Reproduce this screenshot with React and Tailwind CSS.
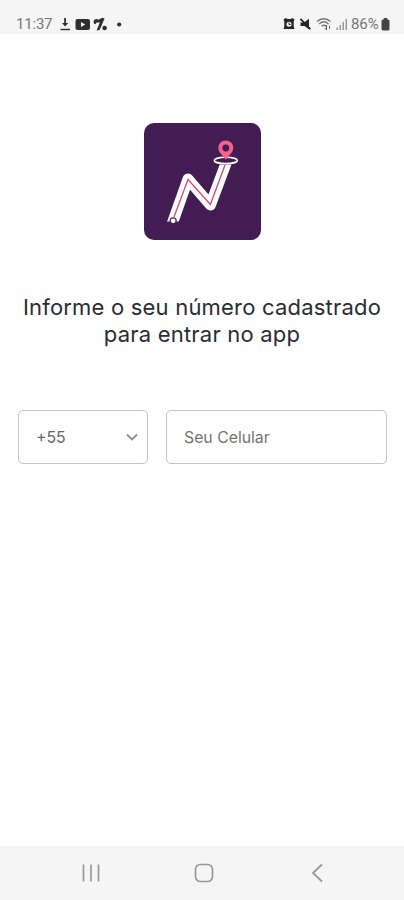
import { useState } from 'react'

function StatusIcons() {
  return (
    <svg width="64" height="16" viewBox="0 0 64 16" className="text-[#303030]" fill="currentColor">
      {/* download */}
      <path d="M4.2 2h1.8v5h2.2L5.1 10.4 2 7h2.2z" />
      <path d="M.5 12.8h9.6v1.4H.5z" />
      {/* video */}
      <rect x="15.5" y="3" width="14.5" height="11" rx="2" />
      <path d="M21 6v5l4.2-2.5z" fill="#f5f5f5" />
      {/* percent-like badge */}
      <path d="M33.6 5.8c0-2.6 3-3.6 5-2l3.4-2 2.6.8L39.6 14l-3 .4 3.2-8-3 .2-1.6 1.6c-1-.2-1.6-1-1.6-2.4z" />
      <circle cx="44.6" cy="12" r="2.3" />
      <circle cx="59.2" cy="8.5" r="2.1" />
    </svg>
  )
}

function SystemIcons() {
  return (
    <svg width="66" height="16" viewBox="0 0 66 16" className="text-[#262626]" fill="currentColor">
      {/* alarm */}
      <path d="M.5 3.5 2.5 2l2 1h3l2-1 2 1.5-.8 2v5l.8 2.5H.5l.8-2.5v-5z" />
      <circle cx="6" cy="8.2" r="2.5" fill="#f5f5f5" />
      <path d="M6 6.5v2h1.6" stroke="currentColor" strokeWidth="1" fill="none" />
      {/* muted speaker */}
      <path d="M17.5 6.5H21l5-3.8v10.6L21.5 10h-4z" />
      <path d="m17.4 2.8 10 10.4" stroke="currentColor" strokeWidth="1.8" />
      {/* wifi */}
      <g fill="none" stroke="#777" strokeWidth="1.4">
        <path d="M34 5.4c4-3.6 9.5-3.6 13.5 0M36.2 7.9c2.8-2.5 6.5-2.5 9.2 0M38.6 10.3c1.4-1.2 3.2-1.2 4.6 0" />
        <path d="M43.5 9v5m-1.6-1.7 1.6 1.7M46.5 12.8V10" stroke="#555" strokeWidth="1" />
      </g>
      {/* signal */}
      <path d="M53.5 11.5h1.6V14h-1.6zM56.5 9H58v5h-1.5zM59.5 6H61v8h-1.5zM62.5 3H64v11h-1.5z" fill="#999" />
    </svg>
  )
}

function StatusBar() {
  return (
    <div className="h-[34px] shrink-0 bg-[#f5f5f5] pt-[13px] px-4 flex items-start justify-between font-['Roboto',sans-serif] text-[15px] leading-[22px] text-[#777]">
      <div className="flex items-center">
        <span className="w-[44px] tracking-[-0.2px]">11:37</span>
        <StatusIcons />
      </div>
      <div className="flex items-center -mr-[2px]">
        <SystemIcons />
        <span className="ml-[2px] w-[30px] tracking-[-0.1px] whitespace-nowrap">86%</span>
        <svg width="9" height="13" viewBox="0 0 9 13" fill="#444">
          <path d="M2.7 0h3.6v1.5H7A1.5 1.5 0 0 1 8.5 3v8A1.5 1.5 0 0 1 7 12.5H2A1.5 1.5 0 0 1 .5 11V3A1.5 1.5 0 0 1 2 1.5h.7z" />
        </svg>
      </div>
    </div>
  )
}

function Logo() {
  return (
    <svg width="117" height="117" viewBox="0 0 117 117" fill="none">
      <clipPath id="road">
        <path d="M0 41.5h117V98.5H0z" />
      </clipPath>
      <rect width="117" height="117" rx="10" fill="#421c52" />
      <g clipPath="url(#road)">
        <path d="M27 104 44 56 66.4 82 84.4 34" stroke="#fff" strokeWidth="11" strokeLinejoin="round" />
        <path d="M30 94 44 56.5 66.4 81.5 81 42" stroke="#d9486f" strokeWidth="1.3" />
      </g>
      <circle cx="29.2" cy="97.8" r="3" fill="#fff" stroke="#421c52" strokeWidth="1.2" />
      <ellipse cx="81.8" cy="37.4" rx="11.5" ry="3.1" fill="#421c52" stroke="#fff" strokeWidth="1.6" />
      <path d="M81.8 37c-1.5-3.5-7.5-7.3-7.5-12.1a7.5 7.5 0 0 1 15 0c0 4.8-6 8.6-7.5 12.1z" fill="#f4628a" />
      <circle cx="81.8" cy="25" r="3.4" fill="#421c52" />
    </svg>
  )
}

function NavBar() {
  return (
    <div className="h-[54px] shrink-0 bg-[#f5f5f5] flex items-center justify-between pl-[81px] pr-[77px]">
      <svg width="20" height="20" viewBox="0 0 20 20" stroke="#999" strokeWidth="1.7">
        <path d="M2.5 1.5v17M10 1.5v17M17.5 1.5v17" />
      </svg>
      <svg width="20" height="20" viewBox="0 0 20 20" fill="none" stroke="#999" strokeWidth="1.7">
        <rect x="1.5" y="1.5" width="17" height="17" rx="5" />
      </svg>
      <svg width="20" height="20" viewBox="0 0 20 20" fill="none" stroke="#999" strokeWidth="1.8">
        <path d="M15 1.5 6 10l9 8.5" />
      </svg>
    </div>
  )
}

export default function App() {
  const [phone, setPhone] = useState('')

  return (
    <div className="w-full h-[900px] bg-white flex flex-col font-['Inter',sans-serif]">
      <StatusBar />

      <main className="flex-1 flex flex-col items-center">
        <div className="mt-[89px]">
          <Logo />
        </div>

        <h1 className="mt-[54px] text-center text-[22px] leading-[27px] tracking-[0.2px] text-[#2a2d31] whitespace-nowrap">
          Informe o seu número cadastrado
          <br />
          para entrar no app
        </h1>

        <div className="mt-[62px] w-full pl-[18px] pr-[17px] flex gap-[18px] text-[15.8px] text-[#666]">
          <button className="w-[130px] h-[54px] pl-[17px] pr-[8px] border border-[#c4c4c4] rounded-[5px] flex items-center justify-between">
            <span className="pt-[2px]">+55</span>
            <svg width="14" height="14" viewBox="0 0 14 14" fill="none" stroke="#8e8e9a" strokeWidth="1.8">
              <path d="m2 4.5 5 5 5-5" />
            </svg>
          </button>
          <input
            type="tel"
            placeholder="Seu Celular"
            value={phone}
            onChange={(e) => setPhone(e.target.value)}
            className="flex-1 min-w-0 h-[54px] px-[17px] border border-[#c4c4c4] rounded-[5px] outline-none placeholder:text-[#737373]"
          />
        </div>
      </main>

      <NavBar />
    </div>
  )
}
